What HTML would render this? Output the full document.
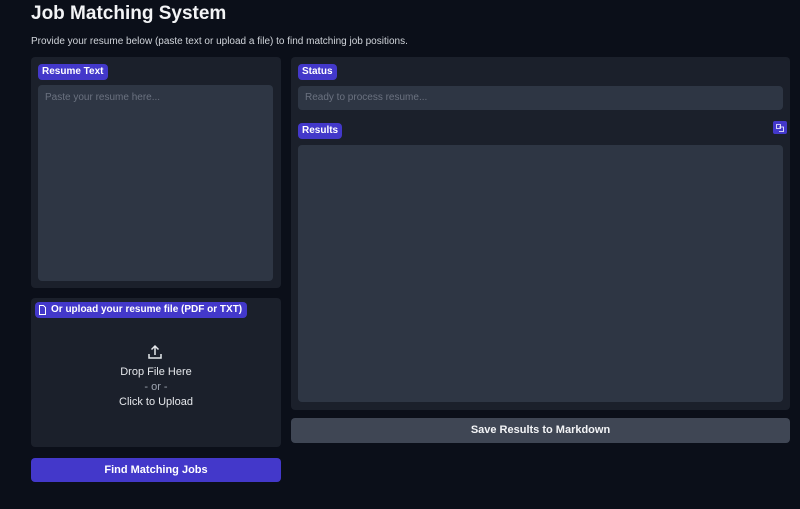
<!DOCTYPE html>
<html><head><style>
body{margin:0;width:800px;height:509px;background:#0b0f19;font-family:"Liberation Sans",sans-serif;color:#e5e7eb;position:relative;overflow:hidden}
.a{position:absolute;box-sizing:border-box}
.panel{background:#1b202b;border-radius:4px}
.inp{background:#2e3644;border-radius:4px}
.lab{background:#4338ca;color:#fff;font-weight:bold;font-size:10px;border-radius:4px;padding:0 4px;height:16px;line-height:16px;white-space:nowrap}
.ph{color:#6b7280;font-size:10px}
</style></head><body>
<div class="a" style="left:31px;top:3px;font-size:19px;font-weight:bold;color:#f3f4f6">Job Matching System</div>
<div class="a" style="left:31px;top:36px;font-size:10px;color:#d1d5db">Provide your resume below (paste text or upload a file) to find matching job positions.</div>

<div class="a panel" style="left:31px;top:57px;width:250px;height:231px"></div>
<div class="a lab" style="left:38px;top:64px">Resume Text</div>
<div class="a inp" style="left:38px;top:85px;width:235px;height:196px"></div>
<div class="a ph" style="left:45px;top:92px">Paste your resume here...</div>

<div class="a panel" style="left:31px;top:298px;width:250px;height:149px"></div>
<div class="a lab" style="left:35px;top:302px;padding-left:16px;padding-right:5px">Or upload your resume file (PDF or TXT)</div>
<svg class="a" style="left:38px;top:305px" width="9" height="10" viewBox="0 0 9 10"><path d="M1.5 .5h4l2 2v7h-6z" fill="none" stroke="#fff" stroke-width="1"/></svg>
<svg class="a" style="left:147px;top:344px" width="16" height="16" viewBox="0 0 16 16"><path d="M8 11V2M4.5 5.5L8 2l3.5 3.5M2 10v4h12v-4" fill="none" stroke="#e5e7eb" stroke-width="1.5"/></svg>
<div class="a" style="left:31px;top:365px;width:250px;text-align:center;font-size:11px;line-height:15px;color:#e5e7eb">Drop File Here<br><span style="color:#9ca3af">- or -</span><br>Click to Upload</div>

<div class="a" style="left:31px;top:458px;width:250px;height:24px;background:#4338ca;border-radius:4px;color:#fff;font-weight:bold;font-size:11px;text-align:center;line-height:24px">Find Matching Jobs</div>

<div class="a panel" style="left:291px;top:57px;width:499px;height:353px"></div>
<div class="a lab" style="left:298px;top:64px">Status</div>
<div class="a inp" style="left:298px;top:86px;width:485px;height:24px"></div>
<div class="a ph" style="left:305px;top:92px">Ready to process resume...</div>
<div class="a lab" style="left:298px;top:123px">Results</div>
<div class="a" style="left:773px;top:121px;width:14px;height:13px;background:#4338ca;border-radius:2px"></div>
<svg class="a" style="left:776px;top:124px" width="8" height="8" viewBox="0 0 8 8"><path d="M.5 .5h4v4h-4zM3 3h4.5v4.5H3" fill="none" stroke="#fff" stroke-width=".8"/></svg>
<div class="a inp" style="left:298px;top:145px;width:485px;height:257px"></div>

<div class="a" style="left:291px;top:418px;width:499px;height:25px;background:#3f4654;border-radius:4px;color:#f3f4f6;font-weight:bold;font-size:11px;text-align:center;line-height:25px">Save Results to Markdown</div>
</body></html>
